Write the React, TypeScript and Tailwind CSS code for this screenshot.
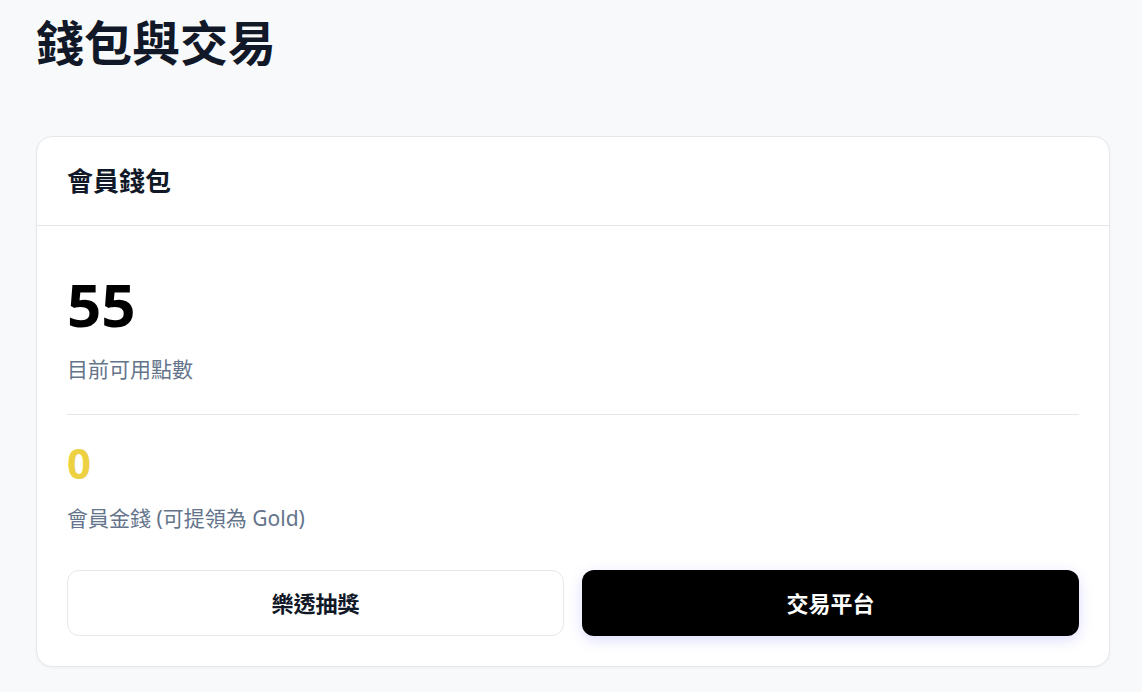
const font = { fontFamily: '"Noto Sans", "Noto Sans CJK TC", sans-serif' };

const WalletCard = () => {
  return (
    <div className="bg-white border border-[#e5e7eb] rounded-2xl shadow-[0_1px_3px_rgba(0,0,0,0.04)]">
      <div className="h-[89px] flex items-center px-[30px] border-b border-[#e5e7eb]">
        <h2 className="text-[26px] font-bold text-[#111827] leading-[36px]">會員錢包</h2>
      </div>

      <div className="px-[30px] pt-[30px] pb-[30px]">
        <div className="text-[60px] font-bold leading-[1.6] text-black">55</div>
        <div className="mt-[3px] text-[21px] leading-[28px] text-[#64748b]">目前可用點數</div>

        <div className="mt-[31px] border-t border-[#e5e7eb]" />

        <div className="mt-[23px] text-[42px] font-bold leading-[1.2] text-[#eed143]">0</div>
        <div className="mt-[16px] text-[21px] leading-[28px] text-[#64748b]">會員金錢 (可提領為 Gold)</div>

        <div className="mt-[38px] grid grid-cols-2 gap-[18px]">
          <button className="h-[66px] rounded-xl border border-[#e5e7eb] bg-white text-[22px] font-bold text-[#111827]">
            樂透抽獎
          </button>
          <button className="h-[66px] rounded-xl bg-black text-[22px] font-bold text-white shadow-[0_4px_14px_rgba(99,102,241,0.22)]">
            交易平台
          </button>
        </div>
      </div>
    </div>
  );
};

export default function App() {
  return (
    <div className="min-h-screen bg-[#f8f9fb] pl-[36px] pr-[32px] pt-[13px] pb-[24px]" style={font}>
      <h1 className="text-[48px] font-bold leading-[60px] text-[#111827]">錢包與交易</h1>
      <div className="mt-[63px]">
        <WalletCard />
      </div>
    </div>
  );
}
